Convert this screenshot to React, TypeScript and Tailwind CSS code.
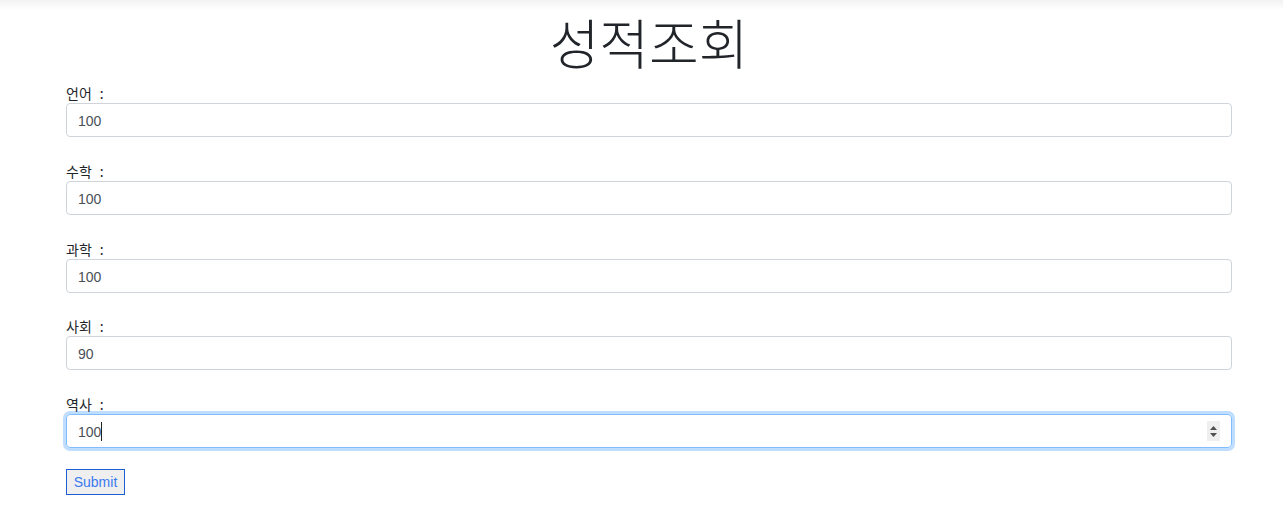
import { useState } from "react";

type Field = {
  key: string;
  label: string;
  value: string;
};

const initial: Field[] = [
  { key: "lang", label: "언어", value: "100" },
  { key: "math", label: "수학", value: "100" },
  { key: "sci", label: "과학", value: "100" },
  { key: "soc", label: "사회", value: "90" },
  { key: "hist", label: "역사", value: "100" },
];

const kr = "font-['Liberation_Sans','Noto_Sans_CJK_KR',sans-serif]";

export default function App() {
  const [fields, setFields] = useState<Field[]>(initial);
  const last = fields.length - 1;

  return (
    <div className={`min-h-[527px] bg-white ${kr}`}>
      {/* top shade */}
      <div className="h-[10px] bg-gradient-to-b from-[#f2f2f2] to-white" />

      <div className="pl-[66px] pr-[51px]">
        {/* TITLE */}
        <h1 className="h-[73px] text-center text-[54px] leading-[64px] font-light text-[#212529] font-['Noto_Sans_CJK_KR',sans-serif]">
          성적조회
        </h1>

        {/* FORM */}
        <form className="flex flex-col gap-[24px]" onSubmit={(e) => e.preventDefault()}>
          {fields.map((f, i) => (
            <div key={f.key} className={`flex flex-col ${i === 3 ? "-mt-px" : ""}`}>
              <label className="h-[20px] text-[14px] leading-[20px] text-[#212529] font-['Noto_Sans_CJK_KR',sans-serif]">
                {f.label}
                <span className="ml-[8px]">:</span>
              </label>
              <div className="relative">
                <input
                  type="text"
                  value={f.value}
                  onChange={(e) =>
                    setFields(
                      fields.map((x) =>
                        x.key === f.key ? { ...x, value: e.target.value } : x
                      )
                    )
                  }
                  className={`block h-[34px] w-full rounded-[4px] border px-[11px] pt-[2px] text-[14px] text-[#495057] outline-none font-['Liberation_Sans',sans-serif] ${
                    i === last
                      ? "border-[#80bdff] shadow-[0_0_0_3px_rgba(0,123,255,0.25)] caret-transparent"
                      : "border-[#ced4da]"
                  }`}
                />
                {i === last && (
                  <>
                    {/* caret */}
                    <span className="absolute left-[35px] top-[8px] h-[19px] w-px bg-[#222]" />
                    {/* spinner */}
                    <span className="absolute right-[12px] top-[7px] flex h-[20px] w-[13px] flex-col items-center justify-center gap-[3px] bg-[#efefef]">
                      <svg width="7" height="4" viewBox="0 0 7 4">
                        <path d="M0 4 L3.5 0 L7 4 Z" fill="#505050" />
                      </svg>
                      <svg width="7" height="4" viewBox="0 0 7 4">
                        <path d="M0 0 L7 0 L3.5 4 Z" fill="#505050" />
                      </svg>
                    </span>
                  </>
                )}
              </div>
            </div>
          ))}

          <div className="-mt-[3px]">
            <button
              type="submit"
              className="h-[26px] w-[59px] border border-[#1d5fd3] bg-[#efefef] text-[14px] text-[#3b7af0] font-['Liberation_Sans',sans-serif]"
            >
              Submit
            </button>
          </div>
        </form>
      </div>
    </div>
  );
}
